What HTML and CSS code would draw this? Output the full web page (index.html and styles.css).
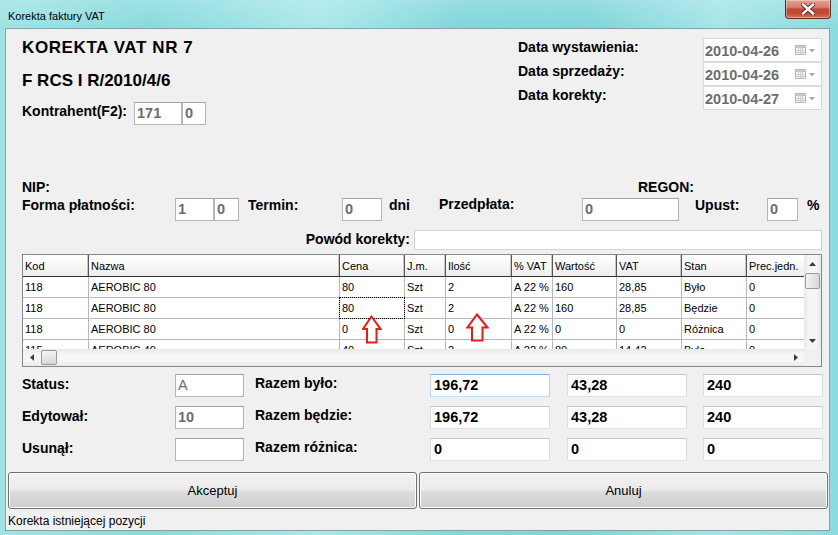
FILE: index.html
```html
<!DOCTYPE html>
<html lang="pl">
<head>
<meta charset="utf-8">
<title>Korekta faktury VAT</title>
<link rel="stylesheet" href="styles.css">
</head>
<body>
<div class="window">
  <div class="titlebar">
    <span class="title">Korekta faktury VAT</span>
    <div class="close">
      <svg width="14" height="12" viewBox="0 0 14 12"><path d="M2 1.5 L12 10.5 M12 1.5 L2 10.5" stroke="#5a2620" stroke-width="4.2" stroke-linecap="square"/><path d="M2 1.5 L12 10.5 M12 1.5 L2 10.5" stroke="#ffffff" stroke-width="2.4" stroke-linecap="square"/></svg>
    </div>
  </div>
  <div class="client">
    <div class="head">
      <div class="head-left">
        <div class="h1">KOREKTA VAT NR 7</div>
        <div class="h2">F RCS I R/2010/4/6</div>
        <div class="kontr">
          <span class="lbl kontr-lbl">Kontrahent(F2):</span>
          <span class="tb dis w48">171</span>
          <span class="tb dis w24">0</span>
        </div>
      </div>
      <div class="dates">
        <span class="lbl">Data wystawienia:</span>
        <span class="dp"><span class="dp-val">2010-04-26</span><svg class="cal" width="11" height="10" viewBox="0 0 11 10"><rect x="0.5" y="0.5" width="10" height="9" fill="#f4f4f4" stroke="#b9b9b9"/><rect x="1" y="1" width="9" height="2" fill="#c8c8c8"/><path d="M1 5.5 H10 M1 7.5 H10 M3.5 3 V9.5 M5.5 3 V9.5 M7.5 3 V9.5" stroke="#d2d2d2" stroke-width="1"/></svg><svg class="tri" width="6" height="4" viewBox="0 0 6 4"><path d="M0 0 H6 L3 3.5 Z" fill="#a7a7a7"/></svg></span>
        <span class="lbl">Data sprzedaży:</span>
        <span class="dp"><span class="dp-val">2010-04-26</span><svg class="cal" width="11" height="10" viewBox="0 0 11 10"><rect x="0.5" y="0.5" width="10" height="9" fill="#f4f4f4" stroke="#b9b9b9"/><rect x="1" y="1" width="9" height="2" fill="#c8c8c8"/><path d="M1 5.5 H10 M1 7.5 H10 M3.5 3 V9.5 M5.5 3 V9.5 M7.5 3 V9.5" stroke="#d2d2d2" stroke-width="1"/></svg><svg class="tri" width="6" height="4" viewBox="0 0 6 4"><path d="M0 0 H6 L3 3.5 Z" fill="#a7a7a7"/></svg></span>
        <span class="lbl">Data korekty:</span>
        <span class="dp"><span class="dp-val">2010-04-27</span><svg class="cal" width="11" height="10" viewBox="0 0 11 10"><rect x="0.5" y="0.5" width="10" height="9" fill="#f4f4f4" stroke="#b9b9b9"/><rect x="1" y="1" width="9" height="2" fill="#c8c8c8"/><path d="M1 5.5 H10 M1 7.5 H10 M3.5 3 V9.5 M5.5 3 V9.5 M7.5 3 V9.5" stroke="#d2d2d2" stroke-width="1"/></svg><svg class="tri" width="6" height="4" viewBox="0 0 6 4"><path d="M0 0 H6 L3 3.5 Z" fill="#a7a7a7"/></svg></span>
      </div>
    </div>

    <div class="ids">
      <span class="lbl nip">NIP:</span>
      <span class="lbl">REGON:</span>
    </div>

    <div class="pay">
      <span class="lbl forma-lbl">Forma płatności:</span>
      <span class="tb dis w39">1</span>
      <span class="tb dis w25">0</span>
      <span class="lbl termin-lbl">Termin:</span>
      <span class="tb dis w40">0</span>
      <span class="lbl dni-lbl">dni</span>
      <span class="lbl przed-lbl">Przedpłata:</span>
      <span class="tb dis w97">0</span>
      <span class="lbl upust-lbl">Upust:</span>
      <span class="tb dis w31">0</span>
      <span class="lbl pct-lbl">%</span>
    </div>

    <div class="reason">
      <span class="lbl reason-lbl">Powód korekty:</span>
      <span class="tb reason-tb"></span>
    </div>

    <div class="grid">
      <div class="viewport">
        <div class="grow ghead">
          <span>Kod</span><span>Nazwa</span><span>Cena</span><span>J.m.</span><span>Ilość</span><span>% VAT</span><span>Wartość</span><span>VAT</span><span>Stan</span><span>Prec.jedn.</span>
        </div>
        <div class="grow">
          <span>118</span><span>AEROBIC 80</span><span>80</span><span>Szt</span><span>2</span><span>A 22 %</span><span>160</span><span>28,85</span><span>Było</span><span>0</span>
        </div>
        <div class="grow">
          <span>118</span><span>AEROBIC 80</span><span class="focus">80</span><span>Szt</span><span>2</span><span>A 22 %</span><span>160</span><span>28,85</span><span>Będzie</span><span>0</span>
        </div>
        <div class="grow">
          <span>118</span><span>AEROBIC 80</span><span>0</span><span>Szt</span><span>0</span><span>A 22 %</span><span>0</span><span>0</span><span>Różnica</span><span>0</span>
        </div>
        <div class="grow">
          <span>115</span><span>AEROBIC 40</span><span>40</span><span>Szt</span><span>2</span><span>A 22 %</span><span>80</span><span>14,42</span><span>Było</span><span>0</span>
        </div>
      </div>
      <div class="vscroll">
        <span class="sb-btn"><svg width="7" height="4" viewBox="0 0 7 4"><path d="M0 4 L3.5 0 L7 4 Z" fill="#3c3c3c"/></svg></span>
        <span class="vthumb"></span>
        <span class="sb-fill"></span>
        <span class="sb-btn"><svg width="7" height="4" viewBox="0 0 7 4"><path d="M0 0 L3.5 4 L7 0 Z" fill="#3c3c3c"/></svg></span>
      </div>
      <div class="hscroll">
        <span class="sb-btn"><svg width="4" height="7" viewBox="0 0 4 7"><path d="M4 0 L0 3.5 L4 7 Z" fill="#3c3c3c"/></svg></span>
        <span class="hthumb"></span>
        <span class="sb-fill"></span>
        <span class="sb-btn"><svg width="4" height="7" viewBox="0 0 4 7"><path d="M0 0 L4 3.5 L0 7 Z" fill="#3c3c3c"/></svg></span>
      </div>
      <div class="corner"></div>

      <svg class="arrow a1" width="20" height="29" viewBox="0 0 20 29"><path d="M9.5 1.5 L18.5 14 L14.5 14 L14.5 27.5 L5 27.5 L5 14 L1 14 Z" fill="#ffffff" stroke="#f01818" stroke-width="2" stroke-linejoin="miter"/></svg>
      <svg class="arrow a2" width="23" height="29" viewBox="0 0 23 29"><path d="M11 1.5 L21.5 14.5 L16.5 14.5 L16.5 27.5 L6 27.5 L6 14.5 L1.5 14.5 Z" fill="#ffffff" stroke="#f01818" stroke-width="2" stroke-linejoin="miter"/></svg>
    </div>

    <div class="summary">
      <span class="lbl sl">Status:</span>
      <span class="tb dis w69 reg">A</span>
      <span class="lbl sr">Razem było:</span>
      <span class="tb tot focus-tb">196,72</span>
      <span class="tb tot">43,28</span>
      <span class="tb tot">240</span>

      <span class="lbl sl">Edytował:</span>
      <span class="tb dis w69">10</span>
      <span class="lbl sr">Razem będzie:</span>
      <span class="tb tot">196,72</span>
      <span class="tb tot">43,28</span>
      <span class="tb tot">240</span>

      <span class="lbl sl">Usunął:</span>
      <span class="tb w69"></span>
      <span class="lbl sr">Razem różnica:</span>
      <span class="tb tot">0</span>
      <span class="tb tot">0</span>
      <span class="tb tot">0</span>
    </div>

    <div class="buttons">
      <button class="btn">Akceptuj</button>
      <button class="btn">Anuluj</button>
    </div>

    <div class="statusbar">Korekta istniejącej pozycji</div>
  </div>
</div>
</body>
</html>
```

FILE: styles.css
```css
* { box-sizing: border-box; }
html, body { margin: 0; padding: 0; }
body {
  width: 838px;
  height: 535px;
  overflow: hidden;
  font-family: "Liberation Sans", Arial, sans-serif;
  color: #000;
}

.window {
  width: 838px;
  height: 535px;
  padding: 0 8px 4px 5px;
  background:
    linear-gradient(180deg, rgba(255,255,255,0.18) 0px, rgba(255,255,255,0) 28px),
    linear-gradient(90deg, #9fe3e5 0%, #88dadd 18%, #a9e8ea 38%, #80d6da 55%, #7fd5d9 70%, #a4e5e8 86%, #8cdbde 100%);
}

.titlebar {
  height: 28px;
  display: flex;
  align-items: flex-start;
}
.title {
  padding: 10px 0 0 3px;
  font-size: 11px;
  line-height: 13px;
  color: #000;
}
.close {
  margin-left: auto;
  margin-right: -1px;
  width: 46px;
  height: 19px;
  border: 1px solid #5b2d27;
  border-top: none;
  border-radius: 0 0 4px 4px;
  background: linear-gradient(180deg, #e2a093 0%, #d67f6c 40%, #c34630 52%, #c44a34 75%, #d6765d 100%);
  box-shadow: inset 0 0 0 1px rgba(255,255,255,0.35);
  display: flex;
  align-items: center;
  justify-content: center;
}
.close svg { margin-top: -1px; }

.client {
  width: 825px;
  height: 503px;
  border: 1px solid #8aa0a4;
  background: #f0f0f0;
}

.lbl {
  font-weight: bold;
  font-size: 14px;
  line-height: 16px;
  white-space: nowrap;
}

.tb {
  display: block;
  height: 23px;
  background: #fff;
  border: 1px solid #b4b4b4;
  border-top-color: #a3a3a3;
  padding-left: 2px;
  font-weight: bold;
  font-size: 14.5px;
  line-height: 21px;
  white-space: nowrap;
  overflow: hidden;
}
.tb.dis { color: #6d6d6d; }
.tb.reg { font-weight: normal; }
.w24 { width: 24px; }
.w25 { width: 25px; }
.w31 { width: 31px; }
.w39 { width: 39px; }
.w40 { width: 40px; }
.w48 { width: 48px; }
.w69 { width: 69px; }
.w97 { width: 97px; }

/* header */
.head {
  display: flex;
  justify-content: space-between;
  align-items: flex-start;
}
.head-left { padding: 10px 0 0 16px; }
.h1, .h2 {
  font-weight: bold;
  font-size: 17px;
  line-height: 18px;
  white-space: nowrap;
}
.h1 { letter-spacing: 0.6px; }
.h2 { margin-top: 15px; }
.kontr {
  margin-top: 12px;
  display: flex;
  align-items: flex-start;
}
.kontr-lbl { width: 112px; margin-top: 1px; }

.dates {
  margin: 9px 7px 0 0;
  display: grid;
  grid-template-columns: 185px 119px;
  grid-auto-rows: 24px;
}
.dates .lbl { margin-top: 1px; }
.dp {
  display: flex;
  align-items: flex-start;
  height: 24px;
  border: 1px solid #dadada;
  background: #fff;
}
.dp-val {
  padding: 4px 0 0 1px;
  font-weight: bold;
  font-size: 14.5px;
  line-height: 16px;
  color: #6d6d6d;
}
.cal { margin: 6px 0 0 auto; }
.tri { margin: 10px 6px 0 3px; }

/* ids */
.ids {
  margin-top: 54px;
  padding-left: 16px;
  display: flex;
}
.nip { width: 616px; }

/* payment */
.pay {
  margin-top: 3px;
  padding-left: 16px;
  display: flex;
  align-items: flex-start;
}
.pay .lbl { margin-top: -1px; }
.forma-lbl { width: 153px; }
.termin-lbl { margin-left: 9px; width: 94px; }
.dni-lbl { margin-left: 7px; width: 50px; }
.pay .przed-lbl { width: 143px; margin-top: -2px; }
.upust-lbl { margin-left: 16px; width: 72px; }
.pct-lbl { margin-left: 9px; }

/* reason */
.reason {
  margin-top: 9px;
  padding-right: 7px;
  display: flex;
  justify-content: flex-end;
  align-items: flex-start;
}
.reason-lbl { margin: 1px 4px 0 0; }
.reason-tb { width: 408px; height: 20px; border-color: #d3d3d3; }

/* data grid */
.grid {
  position: relative;
  margin: 4px 0 0 16px;
  width: 800px;
  height: 113px;
  border: 1px solid #828790;
  background: #fff;
  display: grid;
  grid-template-columns: 781px 17px;
  grid-template-rows: 94px 17px;
}
.viewport { overflow: hidden; }
.grow {
  display: grid;
  grid-template-columns: 66px 251px 65px 41px 66px 41px 64px 65px 65px 65px;
  width: 789px;
  height: 21px;
  font-size: 11px;
}
.grow > span {
  position: relative;
  border-right: 1px solid #b9b9b9;
  border-bottom: 1px solid #b9b9b9;
  padding-left: 2px;
  line-height: 20px;
  white-space: nowrap;
  overflow: hidden;
}
.ghead {
  height: 22px;
  background: linear-gradient(180deg, #ffffff 0%, #f7f7f7 50%, #ececec 100%);
}
.ghead > span {
  border-right: 1px solid #555;
  border-bottom: 1px solid #333;
  padding-top: 1px;
  box-shadow: inset -1px 0 0 #c8c8c8;
}
.grow > span.focus { overflow: visible; }
.focus::after {
  content: "";
  position: absolute;
  left: -1px;
  top: -1px;
  right: -1px;
  bottom: -1px;
  border: 1px dotted #000;
}
.vscroll, .hscroll {
  display: flex;
  background: linear-gradient(90deg, #e8e8e8, #f6f6f6 30%, #f6f6f6 70%, #e8e8e8);
}
.vscroll { flex-direction: column; }
.hscroll { background: linear-gradient(180deg, #e8e8e8, #f6f6f6 30%, #f6f6f6 70%, #e8e8e8); }
.sb-btn {
  flex: 0 0 17px;
  width: 17px;
  height: 17px;
  display: flex;
  align-items: center;
  justify-content: center;
}
.sb-fill { flex: 1; }
.vthumb {
  margin: 1px 0 0 1px;
  width: 15px;
  height: 16px;
  border: 1px solid #9a9a9a;
  border-radius: 2px;
  background: linear-gradient(90deg, #f4f4f4, #e6e6e6 50%, #d8d8d8);
}
.hthumb {
  margin: 1px 0 0 1px;
  width: 16px;
  height: 15px;
  border: 1px solid #9a9a9a;
  border-radius: 2px;
  background: linear-gradient(180deg, #f4f4f4, #e6e6e6 50%, #d8d8d8);
}
.corner { background: #f0f0f0; }
.arrow { position: absolute; }
.a1 { left: 339px; top: 60px; }
.a2 { left: 443px; top: 58px; }

/* summary */
.summary {
  margin-top: 7px;
  padding-left: 16px;
  display: grid;
  grid-template-columns: 153px 80px 175px 137px 136px 120px;
  grid-auto-rows: 23px;
  row-gap: 9px;
  align-items: start;
}
.sl { margin-top: 2px; }
.sr { margin-top: 1px; }
.tot {
  width: 120px;
  padding-left: 3px;
  border-color: #c6c6c6 #dcdcdc #e2e2e2 #dcdcdc;
}
.focus-tb { border-color: #7fb0e0 #b8d4ef #c5dcf2 #b8d4ef; }

/* buttons */
.buttons {
  margin-top: 11px;
  padding: 0 1px 0 2px;
  display: flex;
  gap: 2px;
}
.btn {
  flex: 1;
  height: 37px;
  border: 1px solid #707070;
  border-radius: 3px;
  background: linear-gradient(180deg, #f2f2f2 0%, #ebebeb 48%, #dddddd 52%, #cfcfcf 100%);
  box-shadow: inset 0 0 0 1px #fcfcfc;
  font-family: "Liberation Sans", Arial, sans-serif;
  font-size: 13px;
  color: #000;
  padding: 0;
}

/* status bar */
.statusbar {
  margin-top: 3px;
  height: 18px;
  padding-left: 2px;
  font-size: 12px;
  line-height: 18px;
  background: #f0f0f0;
}
```
